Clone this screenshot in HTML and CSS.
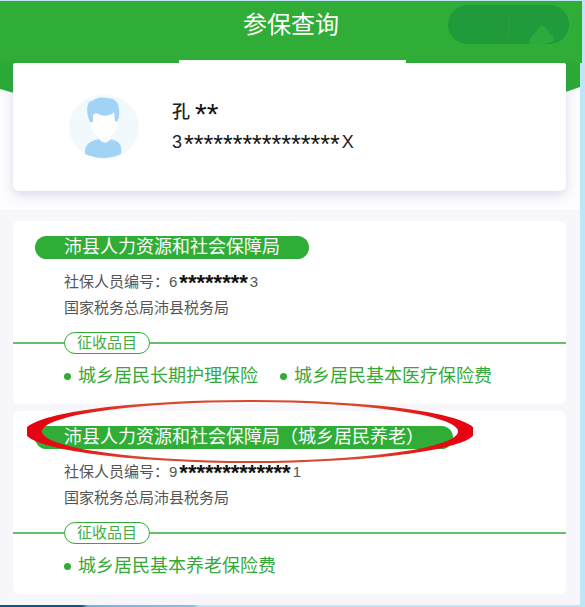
FILE: index.html
```html
<!DOCTYPE html>
<html lang="zh-CN">
<head>
    <meta charset="UTF-8">
    <meta name="viewport" content="width=device-width, initial-scale=1.0">
    <title>参保查询</title>
    <link rel="stylesheet" href="styles.css">
</head>
<body>
    <div class="page">
        <header class="topbar">
            <h1>参保查询</h1>
            <svg class="capsule" width="121" height="39" viewBox="0 0 121 39">
                <rect width="121" height="39" rx="19.5" fill="#219a3b"/>
                <path d="M61 11v20" stroke="#279d3b" stroke-width="2"/>
                <path d="M81 37Q83 31 86 29Q90 23 94 20Q99 23 101 28Q106 31 106 36Q100 39 95 39H82Z" fill="#2bab3b"/>
            </svg>
        </header>

        <section class="hero">
            <div class="profile">
                <svg class="avatar" width="70" height="64" viewBox="0 0 70 64">
                    <ellipse cx="35" cy="32" rx="35" ry="32" fill="#f1f9fd"/>
                    <path d="M16 59C16 49 19 47 30 44Q36 51 42 44C51 47 53 49 52 59Q35 67 16 59Z" fill="#a1d4f4"/>
                    <path d="M30 38h12v6q-6 7 -12 0z" fill="#f7fbfe"/>
                    <path d="M21 17h28v11q-2 14 -14 14T21 28z" fill="#fff"/>
                    <path d="M21 27C17 18 18 11 20 7L23 6Q29 1 38 3Q46 3 49 9Q52 19 48 27L46 26L45 17L43 19Q35 23 27 18L24 20V27Z" fill="#a1d4f4"/>
                </svg>
                <div class="profile-text">
                    <div>孔 <span class="mask mask-lg">**</span></div>
                    <div>3<span class="mask mask-md">****************</span>X</div>
                </div>
            </div>
        </section>

        <main class="list">
            <section class="card">
                <h2 class="pill">沛县人力资源和社会保障局</h2>
                <div class="info">
                    <p>社保人员编号：6<span class="mask">********</span>3</p>
                    <p>国家税务总局沛县税务局</p>
                </div>
                <div class="divider"><span class="tag">征收品目</span></div>
                <ul class="items">
                    <li>城乡居民长期护理保险</li>
                    <li>城乡居民基本医疗保险费</li>
                </ul>
            </section>

            <section class="card">
                <h2 class="pill">沛县人力资源和社会保障局（城乡居民养老）</h2>
                <div class="info">
                    <p>社保人员编号：9<span class="mask">*************</span>1</p>
                    <p>国家税务总局沛县税务局</p>
                </div>
                <div class="divider"><span class="tag">征收品目</span></div>
                <ul class="items">
                    <li>城乡居民基本养老保险费</li>
                </ul>
                <!-- red marker ring around the title -->
                <svg class="ring" width="446" height="63" viewBox="0 0 446 63">
                    <defs>
                        <linearGradient id="red">
                            <stop offset="0" stop-color="#e60012"/>
                            <stop offset="0.08" stop-color="#e60a12"/>
                            <stop offset="0.25" stop-color="#d8492c"/>
                            <stop offset="0.75" stop-color="#d8492c"/>
                            <stop offset="0.92" stop-color="#e60a12"/>
                            <stop offset="1" stop-color="#e60012"/>
                        </linearGradient>
                    </defs>
                    <path fill="url(#red)" fill-rule="evenodd" d="M-2 31.5a225 31.5 0 0 1 450 0a225 31.5 0 0 1 -450 0zM15 31.5a208 29.5 0 0 0 416 0a208 29.5 0 0 0 -416 0z"/>
                </svg>
            </section>
        </main>
    </div>
    <div class="bottom-strip"></div>
</body>
</html>
```

FILE: styles.css
```css
* {
    box-sizing: border-box;
}
body {
    margin: 0;
    padding-top: 1px;
    background: #bfe5f7;
    font-family: "Liberation Sans", "Noto Sans CJK SC", sans-serif;
    color: #222;
}
h1, h2, p, ul {
    margin: 0;
    padding: 0;
    font-weight: 400;
}
.page {
    margin-right: 5px;
    background: #f7f7fb;
}

/* header */
.topbar {
    position: relative;
    height: 62px;
    margin-right: -2px;
    padding-top: 5px;
    background: #30ad37;
    color: #fff;
    text-align: center;
}
.topbar h1 {
    font-size: 24px;
    line-height: 38px;
}
.capsule {
    position: absolute;
    top: 4px;
    right: 13px;
}

/* person */
.hero {
    position: relative;
    padding: 0 14px 19px 13px;
    background: #fdfdff;
}
.hero::before {
    content: "";
    position: absolute;
    inset: 0 0 auto 0;
    height: 34px;
    background: #2bab35;
    clip-path: polygon(0 0, 100% 0, 100% 24px, 97% 30px, 3% 31px, 0 26px);
}
.profile {
    position: relative;
    display: flex;
    align-items: center;
    gap: 33px;
    height: 128px;
    padding-left: 56px;
    background: #fff;
    border-radius: 2px 2px 6px 6px;
    box-shadow: 0 4px 12px rgba(90, 90, 170, 0.22);
    clip-path: inset(-3px -14px -19px -13px);
}
.profile::before {
    content: "";
    position: absolute;
    top: -3px;
    left: 30%;
    right: 29%;
    height: 3px;
    background: #fff;
}
.profile-text {
    font-size: 18px;
    line-height: 30px;
    font-weight: 500;
}
.mask {
    padding: 0 2px;
    font-size: 22px;
    font-weight: 700;
    line-height: 0;
    vertical-align: -3px;
    color: #111;
}
.mask-md {
    font-size: 25px;
    font-weight: 400;
    vertical-align: -5px;
}
.mask-lg {
    padding: 0;
    font-size: 30px;
    font-weight: 400;
    vertical-align: -6px;
}

/* insurance cards */
.list {
    display: flex;
    flex-direction: column;
    gap: 7px;
    padding: 11px 14px 11px 13px;
}
.card {
    position: relative;
    padding: 15px 0;
    background: #fff;
    border-radius: 6px;
}
.pill {
    width: fit-content;
    margin-left: 22px;
    padding: 0 29px;
    border-radius: 12px;
    background: #30ad37;
    color: #fff;
    font-size: 18px;
    line-height: 23px;
}
.info {
    margin: 10px 0 11px 51px;
    font-size: 15px;
    line-height: 26px;
    color: #555;
}
.divider {
    display: flex;
    align-items: center;
}
.divider::before,
.divider::after {
    content: "";
    height: 2px;
    background: #6bbd6c;
}
.divider::before {
    width: 51px;
}
.divider::after {
    flex: 1;
}
.tag {
    padding: 0 12px;
    border: 1px solid #30ad37;
    border-radius: 11px;
    font-size: 15px;
    line-height: 20px;
    color: #43ad45;
}
.items {
    display: flex;
    gap: 22px;
    margin: 9px 0 0 51px;
    list-style: none;
    font-size: 18px;
    line-height: 26px;
    color: #35a839;
}
.items li {
    display: flex;
    align-items: center;
    gap: 7px;
}
.items li::before {
    content: "";
    width: 7px;
    height: 7px;
    border-radius: 50%;
    background: #30ad37;
}
.ring {
    position: absolute;
    top: -11px;
    left: 14px;
}

.bottom-strip {
    height: 2px;
    background: linear-gradient(90deg, #0f5596 0, #0f5596 14%, #6fb6de 15%, #7fc3e6 33%, #bfe5f7 34%);
}
```
